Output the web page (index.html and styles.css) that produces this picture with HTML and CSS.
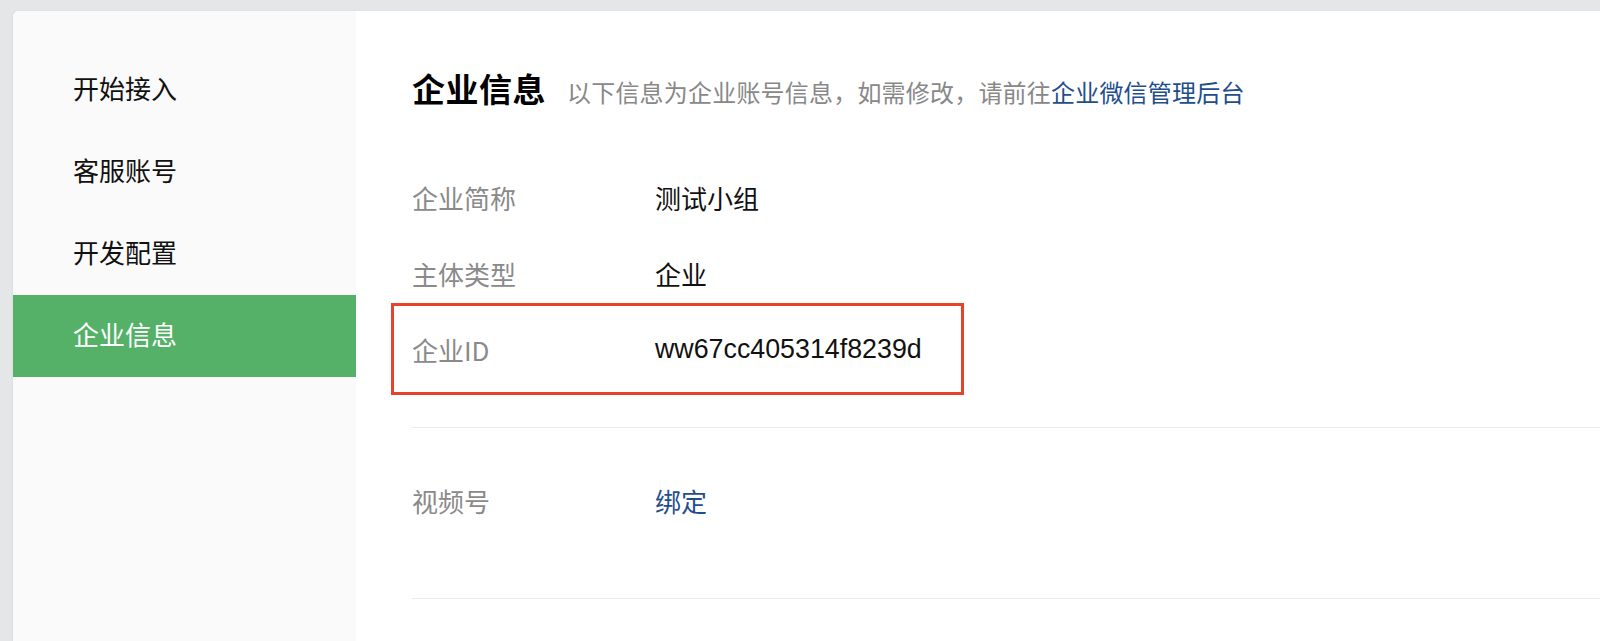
FILE: index.html
```html
<!DOCTYPE html>
<html lang="zh-CN">

<head>
  <meta charset="UTF-8" />
  <meta name="viewport" content="width=device-width, initial-scale=1.0" />
  <title>企业信息</title>
  <link rel="stylesheet" href="styles.css">
</head>

<body>
  <div class="page">
    <div class="card">

      <!-- 左侧菜单 -->
      <ul class="side">
        <li>开始接入</li>
        <li>客服账号</li>
        <li>开发配置</li>
        <li class="active">企业信息</li>
      </ul>

      <!-- 右侧内容 -->
      <div class="main">
        <div class="title">
          <h2>企业信息</h2>
          <span class="tip">以下信息为企业账号信息，如需修改，请前往<a href="#">企业微信管理后台</a></span>
        </div>

        <div class="section">
          <div class="row">
            <span class="label">企业简称</span>
            <span class="value">测试小组</span>
          </div>
          <div class="row">
            <span class="label">主体类型</span>
            <span class="value">企业</span>
          </div>
          <div class="row marked">
            <span class="label">企业ID</span>
            <span class="value latin">ww67cc405314f8239d</span>
            <span class="mark"></span>
          </div>
        </div>

        <div class="section second">
          <div class="row">
            <span class="label">视频号</span>
            <a class="value" href="#">绑定</a>
          </div>
        </div>
      </div>

    </div>
  </div>
</body>

</html>
```

FILE: styles.css
```css
* {
  margin: 0;
  padding: 0;
  box-sizing: border-box;
}

ul {
  list-style: none;
}

a {
  color: #1f4e8c;
  text-decoration: none;
}

body {
  background: #e5e6e8;
  font-family: "Noto Sans CJK SC", "Liberation Sans", sans-serif;
  overflow: hidden;
}

.page {
  height: 641px;
  padding: 11px 0 0 13px;
}

.card {
  display: flex;
  height: 100%;
  background: #fff;
  border-radius: 6px 0 0 0;
  overflow: hidden;
  box-shadow: -1px 0 3px rgba(0, 0, 0, 0.04);
}

.side {
  width: 343px;
  flex-shrink: 0;
  background: #fafafa;
  padding-top: 38px;
}

.side li {
  height: 82px;
  line-height: 78px;
  padding: 0 0 4px 60px;
  font-size: 26px;
  color: #111;
}

.side li.active {
  background: #55b168;
  color: #fff;
}

.main {
  flex: 1;
  padding: 55px 0 0 56px;
}

.title {
  display: flex;
  align-items: baseline;
  height: 44px;
  line-height: 44px;
}

.title h2 {
  font-size: 33px;
  font-weight: bold;
  letter-spacing: 0.5px;
  color: #000;
}

.title .tip {
  margin-left: 21px;
  font-size: 24px;
  letter-spacing: 0.2px;
  color: #888;
}

.section {
  margin-top: 51px;
  padding-bottom: 38px;
  border-bottom: 1px solid #ebebeb;
}

.section.second {
  margin-top: 0;
  padding-top: 36px;
  padding-bottom: 58px;
}

.row {
  display: flex;
  align-items: center;
  height: 76px;
  padding-bottom: 4px;
  font-size: 26px;
  position: relative;
}

.row .label {
  width: 243px;
  color: #8a8a8a;
}

.row .value {
  color: #111;
}

.row a.value {
  color: #1f4e8c;
}

.row .latin {
  font-family: "Liberation Sans", "Noto Sans CJK SC", sans-serif;
  font-size: 26.8px;
}

/* 标注红框 */
.row .mark {
  position: absolute;
  left: -21px;
  top: -10px;
  width: 573px;
  height: 92px;
  border: 3px solid #e8412c;
}
```
